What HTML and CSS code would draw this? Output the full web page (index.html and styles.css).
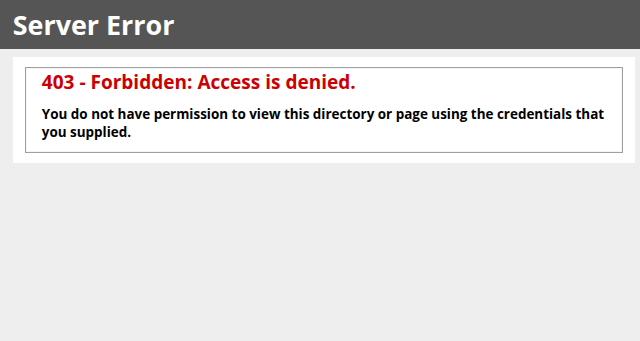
FILE: index.html
```html
<!DOCTYPE html>
<html>
<head>
<meta charset="utf-8">
<title>403 - Forbidden: Access is denied.</title>
<link rel="stylesheet" href="styles.css">
</head>
<body>
<div class="header"><h1 class="title">Server Error</h1></div>
<div class="content">
  <div class="content-container">
    <fieldset class="box">
      <h2 class="error-title">403 - Forbidden: Access is denied.</h2>
      <h3 class="error-text">You do not have permission to view this directory or page using the credentials that you supplied.</h3>
    </fieldset>
  </div>
</div>
</body>
</html>
```

FILE: styles.css
```css
html, body {
  margin: 0;
}
body {
  font-size: 11.2px;
  font-family: "Open Sans", "Liberation Sans", sans-serif;
  background: #eeeeee;
}
.header {
  width: 96%;
  padding: 6px 2%;
  background-color: #555555;
  color: #ffffff;
}
.title {
  font-size: 26.88px;
  margin: 0;
  color: #ffffff;
  font-weight: bold;
}
.content {
  margin: 0 0 0 2%;
  position: relative;
}
.content-container {
  background: #ffffff;
  width: 96%;
  margin-top: 8px;
  padding: 10px;
  box-sizing: content-box;
}
.box {
  margin: 0 2px;
  padding: 1px 16px 11px 16px;
  border: 1px solid #a0a0a0;
  box-shadow: inset 0 0 0 1px #f4f4f4;
  min-width: 0;
}
.error-title {
  font-size: 19.04px;
  margin: 0;
  color: #cc0000;
  font-weight: bold;
}
.error-text {
  font-size: 13.44px;
  margin: 10px 0 0 0;
  color: #000000;
  font-weight: bold;
}
```
